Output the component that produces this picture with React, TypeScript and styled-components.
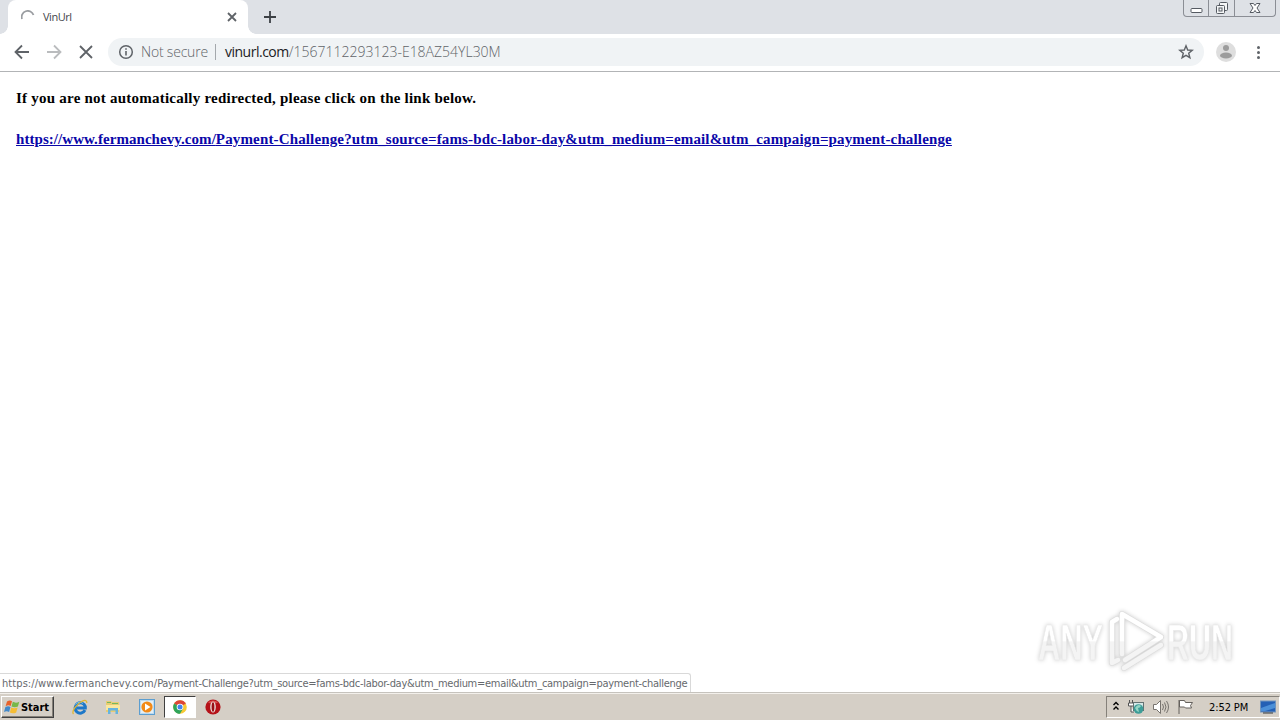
import type { ReactNode } from 'react';
import styled, { createGlobalStyle } from 'styled-components';

const GlobalStyle = createGlobalStyle`
    body {
        margin: 0;
        overflow: hidden;
        background: #fff;
    }

    * {
        box-sizing: border-box;
    }

    svg {
        display: block;
        flex: none;
    }
`;

const uiFont = `'DejaVu Sans Condensed', 'DejaVu Sans', sans-serif`;

const Screen = styled.div`
    display: flex;
    flex-direction: column;
    width: 1280px;
    height: 720px;
    overflow: hidden;
    background: #fff;
`;

const TabStrip = styled.div`
    display: flex;
    height: 34px;
    flex: none;
    padding-left: 8px;
    background: #dee1e6;
`;

const Tab = styled.div`
    position: relative;
    display: flex;
    align-items: center;
    width: 240px;
    padding: 0 10px 0 13px;
    background: #fff;
    border-radius: 8px 8px 0 0;

    &::before,
    &::after {
        content: '';
        position: absolute;
        bottom: 0;
        width: 8px;
        height: 8px;
    }

    &::before {
        left: -8px;
        background: radial-gradient(circle at 0 0, #dee1e6 7.5px, #fff 8px);
    }

    &::after {
        right: -8px;
        background: radial-gradient(circle at 100% 0, #dee1e6 7.5px, #fff 8px);
    }
`;

const TabTitle = styled.span`
    flex: 1;
    margin-left: 8px;
    font: 11px/14px 'Open Sans', sans-serif;
    letter-spacing: -0.45px;
    color: #45484c;
`;

const NewTab = styled.div`
    display: flex;
    align-items: center;
    margin-left: 15px;
`;

const WindowControls = styled.div`
    display: flex;
    width: 93px;
    height: 17px;
    margin: 0 4px 0 auto;
    border: 1px solid #8b8e95;
    border-top: 0;
    border-radius: 0 0 4px 4px;
`;

const WindowButton = styled.div<{ $width: number }>`
    display: flex;
    align-items: center;
    justify-content: center;
    width: ${({ $width }) => $width}px;

    & + & {
        border-left: 1px solid #8b8e95;
    }
`;

const Toolbar = styled.div`
    display: flex;
    align-items: center;
    height: 38px;
    flex: none;
    padding: 0 12px 1px 14px;
    border-bottom: 1px solid #b2b4b6;
    background: #fff;
`;

const NavButtons = styled.div`
    display: flex;
    gap: 16px;
    margin-right: 14px;
`;

const AddressBar = styled.div`
    display: flex;
    align-items: center;
    width: 1096px;
    height: 28px;
    padding: 0 10px;
    border-radius: 14px;
    background: #f0f3f5;
    font: 300 14px/20px 'Open Sans', sans-serif;
    color: #5f6368;
    white-space: nowrap;
`;

const Security = styled.span`
    width: 68px;
    margin-left: 7px;
    letter-spacing: -0.2px;
`;

const Divider = styled.span`
    width: 1px;
    height: 16px;
    margin: 0 9px 0 6px;
    background: #a4a8ac;
`;

const Domain = styled.span`
    letter-spacing: -0.5px;
    color: #202124;
    font-weight: 400;
`;

const UrlPath = styled.span`
    flex: 1;
`;

const ProfileArea = styled.div`
    display: flex;
    align-items: center;
    gap: 14px;
    margin-left: 12px;
`;

const Page = styled.main`
    position: relative;
    flex: 1;
    padding: 16px;
    font: bold 15px/20px 'Liberation Serif', serif;
    white-space: nowrap;
`;

const Message = styled.p`
    margin: 0 0 21px;
    letter-spacing: 0.23px;
    color: #000;
`;

const RedirectLink = styled.a`
    display: block;
    letter-spacing: 0.145px;
    color: #0a06a8;
    text-decoration: underline;
`;

const UrlPart = styled.span<{ $spacing: number }>`
    letter-spacing: ${({ $spacing }) => $spacing}px;
`;

const StatusBubble = styled.div`
    position: absolute;
    left: 0;
    bottom: 0;
    width: 691px;
    height: 19px;
    padding-left: 2px;
    border: 1px solid #d9d9d9;
    border-left: 0;
    border-bottom: 0;
    border-top-right-radius: 3px;
    background: #fff;
    font: 11px/19px ${uiFont};
    letter-spacing: -0.285px;
    color: #66696d;
`;

const Watermark = styled.div`
    position: absolute;
    left: 1030px;
    top: 530px;
    filter: drop-shadow(0 0 2px rgba(0, 0, 0, 0.2));

    svg {
        overflow: visible;
    }
`;

const Taskbar = styled.footer`
    display: flex;
    align-items: center;
    height: 28px;
    flex: none;
    padding: 1px 0 0 1px;
    border-top: 1px solid #c6c3bd;
    background: #d5cfc6;
    box-shadow: inset 0 1px #f3f0eb;
`;

const StartButton = styled.div`
    display: flex;
    align-items: center;
    gap: 1px;
    width: 53px;
    height: 22px;
    padding-left: 2px;
    border: 1px solid;
    border-color: #fff #404040 #404040 #fff;
    box-shadow: inset -1px -1px #858078;
    font: bold 11px/14px ${uiFont};
    color: #000;
`;

const StartLabel = styled.span`
    padding-top: 2px;
    letter-spacing: -0.05px;
`;

const QuickLaunch = styled.div`
    display: flex;
    align-items: center;
    margin-left: 9px;
`;

const LaunchItem = styled.div<{ $active?: boolean }>`
    display: flex;
    align-items: center;
    justify-content: center;
    width: ${({ $active }) => ($active ? 32 : 33.5)}px;
    height: 22px;
    margin-right: ${({ $active }) => ($active ? 1 : 0)}px;
    border: 1px solid;
    border-color: ${({ $active }) =>
        $active ? '#404040 #fff #fff #404040' : 'transparent'};
    background: ${({ $active }) => ($active ? '#fff' : 'transparent')};
`;

const Tray = styled.div`
    display: flex;
    align-items: center;
    gap: 7px;
    width: 174px;
    height: 22px;
    margin-left: auto;
    padding-left: 5px;
    border: 1px solid;
    border-color: #85817a #fff #fff #85817a;
`;

const Clock = styled.span`
    width: 44px;
    margin-left: 8px;
    padding-top: 2px;
    font: 11px/14px ${uiFont};
    letter-spacing: -0.1px;
    color: #000;
    white-space: nowrap;
`;

type IconProps = {
    size?: number;
    color?: string;
    children: ReactNode;
};

const Icon = ({ size = 16, color = '#5f6368', children }: IconProps) => (
    <svg
        width={size}
        height={size}
        viewBox={`0 0 ${size} ${size}`}
        fill="none"
        stroke={color}
        strokeWidth="1.8"
    >
        {children}
    </svg>
);

const WindowsFlag = () => (
    <svg width="16" height="16" viewBox="0 0 16 16">
        <path d="M3 2.5Q6 .5 8 2.3L6.7 7.1Q4.5 5.5 1.6 7.2Z" fill="#e8622b" />
        <path d="M8.8 2.8Q12 4.5 15.3 2.7L13.9 7.6Q10.6 9.1 7.5 7.5Z" fill="#78b84a" />
        <path d="M1.4 8Q4.3 6.5 6.5 8L5.1 13Q2.8 11.4 0 12.9Z" fill="#4289ca" />
        <path d="M7.2 8.5Q10.4 10.1 13.6 8.5L12.2 13.4Q9 15.2 5.9 13.5Z" fill="#f5bd35" />
    </svg>
);

const ExplorerLogo = () => (
    <svg width="16" height="16" viewBox="0 0 16 16" fill="none">
        <path d="M13 11.2A5.2 5.2 0 1 1 13.3 7.5V9H4.8" stroke="#1d78c8" strokeWidth="3" />
        <path d="M3.5 5.5Q7 1.5 11 4.5" stroke="#6fc3f0" strokeWidth="1" />
        <path d="M1.5 15C-1 12 5 5 10 2.3Q15-.1 14.8 4" stroke="#e0b733" strokeWidth="1.3" />
    </svg>
);

const FolderLogo = () => (
    <svg width="16" height="16" viewBox="0 0 16 16">
        <path d="M1 2h5l1 1h7v10H1z" fill="#e8cc72" />
        <path d="M2 3.5h4M7 4.5h6" stroke="#73b760" strokeWidth="1" />
        <path d="M1 6h14v5H1z" fill="#f9e8a0" />
        <path d="M3 15V9h10v6h-2.5v-3.5h-5V15z" fill="#66b4df" />
    </svg>
);

const PlayerLogo = () => (
    <svg width="16" height="16" viewBox="0 0 16 16">
        <rect x=".5" y=".5" width="15" height="15" fill="#bbdaf1" stroke="#5c9ed0" />
        <rect x="2" y="2" width="12" height="12" fill="#e4eff5" />
        <circle cx="8" cy="8" r="5.6" fill="#f28a18" />
        <path d="M6 4.5 11.5 8 6 11.5Z" fill="#fff" />
    </svg>
);

const ChromeLogo = () => (
    <svg width="16" height="16" viewBox="0 0 16 16">
        <circle cx="8" cy="8" r="6.8" fill="#f7c934" />
        <path d="M8 8 2.1 4.6A6.8 6.8 0 0 1 13.9 4.6Z" fill="#dc4638" />
        <path d="M8 8 2.1 4.6A6.8 6.8 0 0 0 8 14.8L11 9.7Z" fill="#2fa45a" />
        <circle cx="8" cy="8" r="3.3" fill="#fff" />
        <circle cx="8" cy="8" r="2.5" fill="#4184ed" />
    </svg>
);

const OperaLogo = () => (
    <svg width="16" height="16" viewBox="0 0 16 16">
        <circle cx="8" cy="8" r="7.6" fill="#b51219" />
        <path d="M3 3.5A7 7 0 0 1 13 3.5Q8 6 3 3.5" fill="#d9504f" />
        <ellipse cx="8" cy="8" rx="2.8" ry="5.6" fill="#eee4df" />
        <ellipse cx="8" cy="8" rx="1.4" ry="4.8" fill="#981016" />
    </svg>
);

const TrayIcons = () => (
    <>
        <svg width="8" height="14" viewBox="0 0 8 14" fill="none" stroke="#000" strokeWidth="1.4">
            <path d="m1.5 5 2.5-2.5L6.5 5M1.5 9.5 4 7l2.5 2.5" />
        </svg>
        <svg width="18" height="16" viewBox="0 0 18 16">
            <path d="M2.5 1v3M5.5 1v3M1.5 4h5v3h-5zM4 7v6h3" fill="#fff" stroke="#555" />
            <rect x="6.5" y="3.5" width="10" height="8" fill="#d5e8e8" stroke="#637272" />
            <circle cx="11.5" cy="10" r="4.8" fill="#3d9d98" />
            <path d="M8 9q3-5 6-2-1 2-3 2l1 4q-3-1-4-4" fill="#96d6c5" />
        </svg>
        <svg width="18" height="16" viewBox="0 0 18 16" fill="none" stroke="#77736e">
            <path d="M1.5 5.5h3l4-4v13l-4-4h-3z" fill="#fff" />
            <path d="M10.5 5q2 3 0 6M12.5 3.5q3 4.5 0 9M14.5 2q4 6 0 12" />
        </svg>
        <svg width="17" height="16" viewBox="0 0 17 16" stroke="#65615d">
            <path d="M2.5 1.5h5l1 2h7l-2 3 1 2.5h-6l-1-1h-5z" fill="#fff" />
            <path d="M2 1v14" />
        </svg>
    </>
);

const AnyRunLogo = () => (
    <svg width="212" height="76" viewBox="0 0 212 76">
        <defs>
            <linearGradient id="lettering" x1="0" y1="20" x2="0" y2="58" gradientUnits="userSpaceOnUse">
                <stop offset=".5" stopColor="#fff" />
                <stop offset=".52" stopColor="#f4f4f4" />
            </linearGradient>
        </defs>
        <g
            fill="url(#lettering)"
            stroke="#e8e8e8"
            strokeWidth=".7"
            fontFamily="'Liberation Sans Narrow', 'Liberation Sans', sans-serif"
            fontSize="50"
        >
            <text x="8" y="58" textLength="65" lengthAdjust="spacingAndGlyphs">ANY</text>
            <text x="137" y="58" textLength="66" lengthAdjust="spacingAndGlyphs">RUN</text>
        </g>
        <g fill="none" strokeLinejoin="round" strokeLinecap="round">
            <path d="M87 17 82 20V61L88 58M94 66 131 43" stroke="#dedede" strokeWidth="6" />
            <path d="M92 52V12L131 35 95 58" stroke="#dedede" strokeWidth="6" />
            <path d="M87 17 82 20V61L88 58M94 66 131 43" stroke="url(#lettering)" strokeWidth="4.5" />
            <path d="M92 52V12L131 35 95 58" stroke="url(#lettering)" strokeWidth="4.5" />
        </g>
    </svg>
);

const Browser = () => (
    <>
        <TabStrip>
            <Tab>
                <Icon size={14} color="#9a9da1">
                    <path d="M1 9A6 6 0 0 1 12.5 5" />
                </Icon>
                <TabTitle>VinUrl</TabTitle>
                <Icon size={12}>
                    <path d="m2 2 8 8M10 2l-8 8" />
                </Icon>
            </Tab>
            <NewTab>
                <Icon size={14} color="#3c4045">
                    <path d="M7 1v12M1 7h12" />
                </Icon>
            </NewTab>
            <WindowControls>
                <WindowButton $width={24}>
                    <svg width="13" height="17" viewBox="0 0 13 17" fill="#fff" stroke="#555a62">
                        <rect x="1" y="8.5" width="11" height="4" rx="1" />
                    </svg>
                </WindowButton>
                <WindowButton $width={26}>
                    <svg width="14" height="17" viewBox="0 0 14 17" fill="#f5f6f7" stroke="#555a62">
                        <rect x="4.5" y="2.5" width="8" height="8" rx="1" />
                        <rect x="1.5" y="5.5" width="8" height="8" rx="1" />
                        <rect x="4" y="8" width="3" height="3" />
                    </svg>
                </WindowButton>
                <WindowButton $width={41}>
                    <svg width="12" height="17" viewBox="0 0 12 17" fill="#fff" stroke="#555a62">
                        <path d="M1 3.5h3.5l1.5 2 1.5-2H11L8 8l3 4.5H7.5l-1.5-2-1.5 2H1L4 8z" />
                    </svg>
                </WindowButton>
            </WindowControls>
        </TabStrip>
        <Toolbar>
            <NavButtons>
                <Icon>
                    <path d="M15 8H2M8 1.5 1.5 8 8 14.5" />
                </Icon>
                <Icon color="#babcbe">
                    <path d="M1 8h13M8 1.5 14.5 8 8 14.5" />
                </Icon>
                <Icon>
                    <path d="m2 2 12 12M14 2 2 14" />
                </Icon>
            </NavButtons>
            <AddressBar>
                <Icon>
                    <circle cx="8" cy="8" r="6.3" strokeWidth="1.5" />
                    <path d="M8 7v4.5M8 4.2v1.6" strokeWidth="1.6" />
                </Icon>
                <Security>Not secure</Security>
                <Divider />
                <Domain>vinurl.com</Domain>
                <UrlPath>/1567112293123-E18AZ54YL30M</UrlPath>
                <Icon>
                    <path
                        d="m8 1.8 1.7 4.2 4.5.3-3.5 2.9 1.2 4.5L8 11.3l-3.9 2.4 1.2-4.5-3.5-2.9 4.5-.3z"
                        strokeWidth="1.4"
                    />
                </Icon>
            </AddressBar>
            <ProfileArea>
                <svg width="20" height="20" viewBox="0 0 20 20">
                    <circle cx="10" cy="10" r="10" fill="#dedede" />
                    <circle cx="10" cy="6" r="3" fill="#9c9c9c" />
                    <ellipse cx="10" cy="13.5" rx="6" ry="3" fill="#9c9c9c" />
                </svg>
                <svg width="16" height="16" viewBox="0 0 16 16" fill="#5f6368">
                    <circle cx="8.5" cy="3.5" r="1.5" />
                    <circle cx="8.5" cy="8.5" r="1.5" />
                    <circle cx="8.5" cy="13.5" r="1.5" />
                </svg>
            </ProfileArea>
        </Toolbar>
        <Page>
            <Message>If you are not automatically redirected, please click on the link below.</Message>
            <RedirectLink href="#">
                <UrlPart $spacing={0.055}>https://www.fermanchevy.com/</UrlPart>
                Payment-Challenge?utm_source=fams-bdc-labor-day&amp;utm_medium=email&amp;utm_campaign=payment-challenge
            </RedirectLink>
            <Watermark>
                <AnyRunLogo />
            </Watermark>
            <StatusBubble>
                <UrlPart $spacing={0.08}>https://www.fermanchevy.com/</UrlPart>
                Payment-Challenge?utm_source=fams-bdc-labor-day&amp;utm_medium=email&amp;utm_campaign=payment-challenge
            </StatusBubble>
        </Page>
    </>
);

const App = () => (
    <Screen>
        <GlobalStyle />
        <Browser />
        <Taskbar>
            <StartButton>
                <WindowsFlag />
                <StartLabel>Start</StartLabel>
            </StartButton>
            <QuickLaunch>
                <LaunchItem>
                    <ExplorerLogo />
                </LaunchItem>
                <LaunchItem>
                    <FolderLogo />
                </LaunchItem>
                <LaunchItem>
                    <PlayerLogo />
                </LaunchItem>
                <LaunchItem $active>
                    <ChromeLogo />
                </LaunchItem>
                <LaunchItem>
                    <OperaLogo />
                </LaunchItem>
            </QuickLaunch>
            <Tray>
                <TrayIcons />
                <Clock>2:52 PM</Clock>
                <svg width="16" height="14" viewBox="0 0 16 14">
                    <rect x=".5" y="1" width="15" height="11" fill="#2460b5" stroke="#7295bd" />
                    <path d="M1 8 15 3v5L5 11H1z" fill="#4c90d8" />
                    <path d="M3 13h10" stroke="#34383d" />
                </svg>
            </Tray>
        </Taskbar>
    </Screen>
);

export default App;
